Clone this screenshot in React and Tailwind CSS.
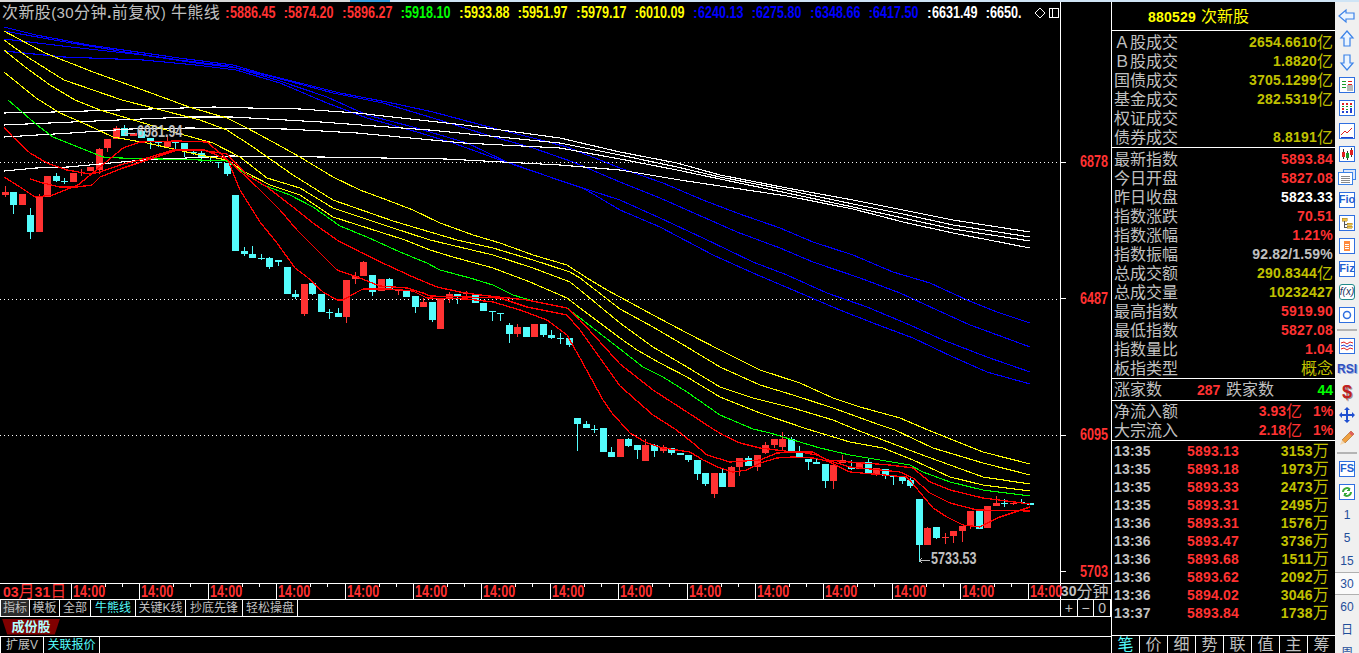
// Index K-line terminal: chart with moving averages, quote panel and side toolbar
const RED = "#ff3232";
const CYAN = "#54fcfc";

// [bar, bodyTop, bodyBottom, wickTop, wickBottom, colour]
const bars = [
  [0, 192, 195, 186, 197, "r"], [1, 192, 205, 192, 214, "c"], [2, 194, 205, 194, 205, "r"], [3, 215, 232, 208, 239, "c"],
  [4, 197, 232, 194, 232, "r"], [5, 176, 197, 176, 197, "r"], [6, 176, 181, 173, 182, "c"], [7, 181, 182, 178, 184, "c"],
  [8, 173, 182, 173, 182, "r"], [9, 172, 173, 169, 176, "r"], [10, 167, 171, 167, 171, "r"], [11, 149, 170, 148, 174, "r"],
  [12, 139, 148, 139, 152, "r"], [13, 128, 139, 126, 139, "r"], [14, 128, 136, 125, 136, "c"], [15, 133, 136, 133, 136, "r"],
  [16, 131, 138, 131, 138, "c"], [17, 138, 141, 138, 149, "c"], [18, 142, 143, 141, 147, "c"], [19, 142, 147, 135, 147, "r"],
  [20, 142, 143, 142, 149, "c"], [21, 143, 150, 143, 157, "c"], [22, 152, 153, 150, 155, "c"], [23, 153, 157, 151, 162, "c"],
  [24, 160, 161, 158, 162, "c"], [25, 162, 163, 162, 168, "c"], [26, 163, 174, 163, 176, "c"], [27, 195, 251, 195, 251, "c"],
  [28, 251, 254, 247, 256, "c"], [29, 254, 258, 246, 258, "c"], [30, 258, 259, 254, 260, "c"], [31, 258, 267, 257, 269, "c"],
  [32, 260, 262, 260, 266, "c"], [33, 267, 294, 267, 294, "c"], [34, 294, 297, 290, 299, "c"], [35, 284, 314, 284, 316, "r"],
  [36, 283, 294, 283, 295, "c"], [37, 294, 312, 294, 312, "c"], [38, 312, 313, 309, 319, "c"], [39, 313, 317, 308, 317, "c"],
  [40, 280, 317, 280, 323, "r"], [41, 276, 279, 272, 284, "r"], [42, 262, 276, 261, 276, "r"], [43, 275, 292, 275, 296, "c"],
  [44, 279, 291, 279, 291, "r"], [45, 279, 290, 278, 290, "c"], [46, 290, 291, 290, 295, "r"], [47, 290, 297, 290, 297, "c"],
  [48, 296, 307, 296, 313, "c"], [49, 302, 307, 298, 307, "r"], [50, 302, 320, 302, 322, "c"], [51, 299, 329, 299, 329, "r"],
  [52, 294, 299, 292, 303, "r"], [53, 294, 296, 294, 304, "c"], [54, 293, 294, 291, 296, "r"], [55, 294, 303, 294, 303, "c"],
  [56, 303, 311, 303, 311, "c"], [57, 311, 312, 311, 321, "c"], [58, 313, 314, 313, 321, "c"], [59, 325, 334, 323, 343, "c"],
  [60, 327, 334, 324, 337, "r"], [61, 327, 337, 327, 337, "c"], [62, 324, 337, 324, 337, "r"], [63, 324, 335, 324, 337, "c"],
  [64, 335, 338, 330, 339, "c"], [65, 338, 339, 333, 344, "c"], [66, 338, 345, 338, 347, "c"],
  [67, 418, 424, 418, 451, "c"], [68, 424, 428, 421, 428, "c"], [69, 429, 430, 425, 433, "c"], [70, 428, 452, 428, 452, "c"],
  [71, 452, 457, 447, 457, "c"], [72, 439, 457, 439, 457, "r"], [73, 439, 446, 438, 447, "c"], [74, 445, 450, 445, 459, "c"],
  [75, 445, 461, 439, 461, "r"], [76, 445, 451, 444, 457, "c"], [77, 447, 451, 445, 453, "r"], [78, 448, 453, 448, 455, "c"],
  [79, 453, 455, 453, 455, "c"], [80, 455, 460, 455, 462, "c"], [81, 460, 474, 460, 480, "c"], [82, 473, 484, 473, 486, "c"],
  [83, 473, 494, 473, 498, "r"], [84, 473, 487, 468, 487, "c"], [85, 467, 487, 466, 487, "r"], [86, 458, 467, 458, 476, "r"],
  [87, 458, 466, 456, 466, "c"], [88, 455, 467, 455, 471, "r"], [89, 445, 453, 442, 454, "r"], [90, 439, 445, 439, 448, "r"],
  [91, 439, 447, 432, 450, "r"], [92, 439, 451, 437, 453, "c"], [93, 452, 457, 446, 457, "c"], [94, 459, 462, 459, 470, "c"],
  [95, 462, 464, 459, 464, "c"], [96, 464, 481, 464, 488, "c"], [97, 465, 481, 465, 489, "r"], [98, 460, 463, 455, 463, "r"],
  [99, 467, 469, 460, 470, "c"], [100, 462, 469, 462, 469, "r"], [101, 462, 474, 459, 474, "c"], [102, 468, 474, 468, 476, "r"],
  [103, 469, 476, 469, 479, "c"], [104, 476, 477, 476, 485, "c"], [105, 477, 481, 477, 484, "c"], [106, 480, 486, 477, 488, "c"],
  [107, 499, 545, 499, 562, "c"], [108, 528, 545, 527, 545, "r"], [109, 527, 538, 527, 539, "c"], [110, 537, 538, 533, 544, "r"],
  [111, 531, 536, 531, 543, "r"], [112, 526, 531, 526, 542, "r"], [113, 511, 526, 511, 529, "r"], [114, 511, 529, 511, 529, "c"],
  [115, 506, 528, 506, 528, "r"], [116, 503, 506, 496, 506, "r"], [117, 503, 504, 499, 507, "c"], [118, 503, 504, 501, 505, "r"],
  [119, 502, 503, 499, 503, "c"], [120, 503, 505, 503, 505, "c"],
];

// Moving-average series, one polyline each
const averages = [
  { color: "#0000ff", pts: "4,27 36,35 89,45 179,58 233,65 260,73 300,83 340,93 387,102 433,112 493,128 533,138 567,147 620,168 663,183 703,200 737,213 780,228 813,242 853,255 893,272 930,283 967,300 997,312 1030,323" },
  { color: "#0000ff", pts: "4,31 54,40 125,52 179,60 229,66 277,78 333,93 383,103 433,118 487,135 533,148 573,162 620,182 660,198 703,217 737,232 780,248 813,262 860,278 900,293 937,310 970,325 1003,337 1030,347" },
  { color: "#0000ff", pts: "4,39 71,47 143,55 196,63 236,68 277,80 327,97 367,115 413,127 467,143 507,162 567,183 620,200 660,218 703,238 753,262 787,275 827,293 867,307 910,325 943,340 987,357 1030,372" },
  { color: "#0000ff", pts: "4,51 64,57 143,60 196,65 236,70 280,83 327,103 367,118 417,132 453,143 500,160 550,177 583,188 620,210 660,227 713,255 753,273 793,290 840,310 873,323 913,338 953,357 987,372 1030,384" },
  { color: "#ffffff", pts: "4,113 54,112 118,110 214,107 250,108 300,109 357,113 464,125 560,138 620,152 677,163 720,175 787,188 853,200 903,210 953,220 1030,232" },
  { color: "#ffffff", pts: "4,125 118,120 188,117 232,117 321,122 429,130 560,143 620,155 677,167 720,177 787,190 853,204 903,214 953,225 1030,237" },
  { color: "#ffffff", pts: "4,137 71,133 130,129 189,128 286,129 357,133 464,143 560,148 620,159 677,170 720,179 787,193 853,207 903,218 953,229 1030,241" },
  { color: "#ffffff", pts: "4,171 36,168 68,167 143,160 229,156 321,157 446,159 560,165 620,170 680,180 720,186 787,196 853,209 903,222 953,233 1030,248" },
  { color: "#ffff00", pts: "4,31 45,53 93,72 143,90 189,107 227,118 247,128 273,142 300,157 333,177 360,190 387,200 413,210 440,223 473,235 500,243 533,255 567,265 587,278 607,290 620,297 653,315 687,333 720,350 760,370 800,383 833,398 860,407 900,418 928,430 983,452 1030,464" },
  { color: "#ffff00", pts: "4,40 29,58 64,80 122,100 200,120 227,130 253,147 293,175 333,200 393,221 457,240 493,248 533,260 570,272 580,278 620,309 653,327 687,347 720,367 760,385 793,395 833,408 880,425 895,430 933,448 983,463 1030,475" },
  { color: "#ffff00", pts: "4,50 25,67 50,85 75,100 100,110 177,133 213,143 240,157 267,178 300,188 333,208 393,228 430,240 493,255 533,268 570,282 580,290 620,323 653,347 687,367 720,387 753,398 793,408 833,420 857,430 917,453 983,477 1030,484" },
  { color: "#ffff00", pts: "4,72 36,98 60,113 83,123 113,137 147,143 200,155 227,160 245,172 270,185 300,195 333,217 405,240 430,250 453,257 493,268 530,282 567,298 580,308 620,338 637,350 660,363 687,377 720,397 760,413 807,429 850,442 883,448 913,460 950,477 983,485 1030,491" },
  { color: "#00ff00", pts: "8,100 22,112 37,125 53,137 93,153 103,157 120,158 200,160 227,161 240,170 263,185 290,195 313,207 340,226 367,237 400,252 427,263 440,270 470,278 493,285 513,295 533,301 567,308 580,318 620,349 643,367 663,377 687,392 720,415 753,429 770,433 793,440 820,448 850,455 910,465 923,472 950,482 983,490 1030,496" },
  { color: "#ff0000", pts: "4,127 13,137 30,153 47,163 67,170 90,174 100,172 120,165 147,158 173,150 200,150 227,154 247,175 267,187 293,207 313,223 337,240 360,252 387,265 413,277 437,287 460,292 480,295 527,300 567,308 580,320 620,364 653,390 687,412 713,429 723,435 740,443 760,448 793,452 813,452 827,460 850,462 890,465 913,468 930,482 950,490 983,498 1030,504" },
  { color: "#ff0000", pts: "30,179 43,183 60,187 77,187 92,185 100,177 123,168 147,160 177,150 205,150 228,160 257,187 280,210 297,230 317,250 337,270 360,278 380,286 407,288 423,293 430,296 467,297 500,298 527,307 567,315 580,330 620,386 653,415 675,429 693,443 707,455 730,462 760,460 777,453 800,452 817,455 827,460 850,467 900,472 913,478 930,493 950,503 977,510 1030,511" },
  { color: "#ff0000", pts: "4,177 20,187 35,197 53,195 78,185 100,167 123,148 140,142 177,141 207,142 228,160 240,190 260,222 277,243 295,268 307,277 323,292 337,300 343,300 357,292 363,289 390,289 413,291 427,298 467,299 493,302 520,310 547,320 567,335 580,358 603,400 612,413 630,433 647,443 663,448 690,452 703,460 720,468 733,472 747,470 760,463 777,458 793,457 813,458 827,461 850,472 907,477 918,490 933,508 947,517 963,525 980,527 997,518 1030,507" },
];

const legend = [
  ["5886.45", "text-[#ff3232]"], ["5874.20", "text-[#ff3232]"], ["5896.27", "text-[#ff3232]"], ["5918.10", "text-[#00ff00]"],
  ["5933.88", "text-[#ffff00]"], ["5951.97", "text-[#ffff00]"], ["5979.17", "text-[#ffff00]"], ["6010.09", "text-[#ffff00]"],
  ["6240.13", "text-[#0000ff]"], ["6275.80", "text-[#0000ff]"], ["6348.66", "text-[#0000ff]"], ["6417.50", "text-[#0000ff]"],
  ["6631.49", "text-white"],
];

const YEL = "text-[#c0c000]";
const REDT = "text-[#ff3232]";

const sectionA = [
  ["Ａ股成交", "2654.6610", "亿", YEL], ["Ｂ股成交", "1.8820", "亿", YEL], ["国债成交", "3705.1299", "亿", YEL],
  ["基金成交", "282.5319", "亿", YEL], ["权证成交", "", "", YEL], ["债券成交", "8.8191", "亿", YEL],
];
const sectionB = [
  ["最新指数", "5893.84", "", REDT], ["今日开盘", "5827.08", "", REDT], ["昨日收盘", "5823.33", "", "text-white"],
  ["指数涨跌", "70.51", "", REDT], ["指数涨幅", "1.21%", "", REDT], ["指数振幅", "92.82/1.59%", "", "text-[#c0c0c0]"],
  ["总成交额", "290.8344", "亿", YEL], ["总成交量", "10232427", "", YEL], ["最高指数", "5919.90", "", REDT],
  ["最低指数", "5827.08", "", REDT], ["指数量比", "1.04", "", REDT], ["板指类型", "", "概念", YEL],
];
const ticks = [
  ["13:35", "5893.13", "3153"], ["13:35", "5893.18", "1973"], ["13:35", "5893.33", "2473"], ["13:35", "5893.31", "2495"],
  ["13:36", "5893.31", "1576"], ["13:36", "5893.47", "3736"], ["13:36", "5893.68", "1511"], ["13:36", "5893.62", "2092"],
  ["13:36", "5894.02", "3046"], ["13:37", "5893.84", "1738"],
];

// Tall condensed digits used on the chart, squeezed from the bold face
const Digits = ({ children, className = "" }) => (
  <span className={`inline-block origin-left scale-x-[0.74] whitespace-nowrap text-[17px] font-bold leading-[16px] ${className}`}>
    {children}
  </span>
);

const Chart = () => (
  <svg width="1060" height="559" viewBox="0 24 1060 559" shapeRendering="crispEdges" className="block">
    {[162, 299, 435].map((y) => (
      <line key={y} x1="0" x2="1060" y1={y + 0.5} y2={y + 0.5} stroke="#fff" strokeDasharray="1 3" />
    ))}
    {bars.map(([i, top, bot, wt, wb, c]) => {
      const x = Math.round(4.5 + 8.546 * i);
      const fill = c === "r" ? RED : CYAN;
      return (
        <g key={i} fill={fill}>
          <rect x={x} y={wt} width="1" height={wb - wt} />
          <rect x={x - 3} y={top} width="7" height={bot - top} />
        </g>
      );
    })}
    {averages.map((a, i) => (
      <polyline key={i} points={a.pts} fill="none" stroke={a.color} strokeWidth={a.color === "#ff0000" ? 1.3 : 1.1} />
    ))}
    <path d="M919 560.5h11M919 560.5l3-2M919 560.5l3 2" stroke="#c0c0c0" fill="none" />
    <path d="M124 133.5h11M124 133.5l3-2M124 133.5l3 2" stroke="#c0c0c0" fill="none" />
  </svg>
);

const Row = ({ label, value, unit, color }) => (
  <div className="flex h-[19px] items-center justify-between pl-[2px] pr-[2px]">
    <span className="text-[16px] leading-[19px] text-[#c0c0c0]">{label}</span>
    <span className={`flex items-center ${color}`}>
      <span className="text-[14px] font-bold tracking-[0.2px]">{value}</span>
      {unit && <span className="text-[16px] leading-[19px]">{unit}</span>}
    </span>
  </div>
);

const Frame = ({ children }) => (
  <svg width="16" height="16" viewBox="0 0 16 16" shapeRendering="crispEdges">
    <rect x="0.5" y="0.5" width="15" height="15" fill="#fff" stroke="#2f6fe0" />
    {children}
  </svg>
);

const FrameText = ({ children }) => (
  <span className="flex h-4 w-4 items-center justify-center border border-[#2f6fe0] bg-white text-[11px] font-bold leading-none text-[#1f5fd0]">
    {children}
  </span>
);

const arrow = (d) => (
  <svg width="18" height="18" viewBox="0 0 18 18">
    <path d={d} fill="#eaf4ff" stroke="#3b82e8" strokeWidth="1.2" />
  </svg>
);

const toolIcons = [
  arrow("M1 9 8 3v3h8v6H8v3z"),
  arrow("M9 1l6 7h-3v8H6V8H3z"),
  arrow("M9 17l6-7h-3V2H6v8H3z"),
  <Frame>
    <path d="M3 4h4v1H3zM3 7h4v1H3zM3 10h4v1H3z" fill="#1a9a2a" /><path d="M9 4h4v1H9zM9 7h4v1H9z" fill="#e02020" />
    <circle cx="11" cy="11" r="3.5" fill="#b8b8b8" />
  </Frame>,
  <Frame>
    <path d="M3 3h2v2H3zM3 8h2v2H3zM7 3h2v2H7zM11 3h2v2h-2z" fill="#e02020" />
    <path d="M3 6h2v1H3zM7 6h2v1H7zM11 6h2v1h-2zM7 9h2v1H7z" fill="#1a9a2a" />
    <path d="M3 11h2v2H3zM7 11h2v2H7zM11 8h2v5h-2z" fill="#2040d0" />
  </Frame>,
  <Frame>
    <polyline points="2,12 6,8 8,10 13,5" fill="none" stroke="#e02020" shapeRendering="auto" />
    <path d="M2 14h12" stroke="#2040d0" />
  </Frame>,
  <Frame>
    <path d="M4 3v10M8 5v9M12 2v9" stroke="#333" />
    <rect x="3" y="6" width="3" height="5" fill="#e02020" /><rect x="7" y="7" width="3" height="5" fill="#1a9a2a" /><rect x="11" y="4" width="3" height="5" fill="#e02020" />
  </Frame>,
  <svg width="18" height="16" viewBox="0 0 18 16" shapeRendering="crispEdges">
    <rect x="5.5" y="0.5" width="12" height="10" fill="#dce8fb" stroke="#3b82e8" />
    <rect x="0.5" y="3.5" width="14" height="12" fill="#fff" stroke="#3b82e8" />
    <path d="M3 7h9M3 9h9M3 11h9M3 13h9" stroke="#888" />
  </svg>,
  <FrameText>Fio</FrameText>,
  <Frame>
    <path d="M3 3h5v3H3zM8 8h5v2H8zM8 11h5v2H8z" fill="#f0c040" stroke="#a08020" strokeWidth="0.5" /><path d="M5 6v6h3M5 9h3" stroke="#555" fill="none" />
  </Frame>,
  <Frame>
    <path d="M5 3h6v10H5z" fill="#ff8a3c" /><path d="M6 6h4M6 8h4M6 10h4" stroke="#fff" />
  </Frame>,
  <FrameText>Fiz</FrameText>,
  <span className="flex h-4 w-4 items-center justify-center rounded-[3px] border border-[#1f8a8a] bg-white text-[10px] italic leading-none text-[#203060]">f(x)</span>,
  <Frame><circle cx="8" cy="8" r="3.5" fill="none" stroke="#2f6fe0" strokeWidth="1.5" shapeRendering="auto" /></Frame>,
  "sep",
  <Frame>
    <polyline points="2,5 5,4 8,6 11,4 14,5" fill="none" stroke="#e02020" shapeRendering="auto" />
    <polyline points="2,8 5,7 8,9 11,7 14,8" fill="none" stroke="#2040d0" shapeRendering="auto" />
    <polyline points="2,11 5,10 8,12 11,10 14,11" fill="none" stroke="#e02020" shapeRendering="auto" />
  </Frame>,
  <span className="text-[12px] font-bold leading-none text-[#2f4fc0] [text-shadow:1px_1px_0_#9fb0e0]">RSI</span>,
  <span className="text-[18px] font-bold leading-none text-[#c02020] [text-shadow:1px_1px_0_#999]">$</span>,
  <svg width="18" height="18" viewBox="0 0 18 18">
    <path d="M9 1l3 3h-2v4h4V6l3 3-3 3v-2h-4v4h2l-3 3-3-3h2v-4H4v2L1 9l3-3v2h4V4H6z" fill="#1f4fd0" />
  </svg>,
  <svg width="18" height="18" viewBox="0 0 18 18">
    <path d="M13 2l3 3-9 9-3-3z" fill="#f0a040" stroke="#a06020" strokeWidth="0.6" />
    <path d="M4 11l3 3-5 2z" fill="#f4d8b0" /><path d="M13 2l3 3-2 2-3-3z" fill="#e06060" />
  </svg>,
  "sep",
  <FrameText>FS</FrameText>,
  <Frame>
    <path d="M4 8a4 4 0 0 1 7-2.5M12 8a4 4 0 0 1-7 2.5" fill="none" stroke="#38a838" strokeWidth="2" shapeRendering="auto" />
    <path d="M11 3v4H8zM5 13V9h3z" fill="#38a838" />
  </Frame>,
];

const periods = ["1", "5", "15", "30", "60", "日", "周"];

const Toolbar = () => (
  <div className="flex w-[24px] shrink-0 flex-col items-center bg-[#f0f0f0] pt-[2px]">
    {toolIcons.map((icon, i) =>
      icon === "sep" ? (
        <div key={i} className="flex h-[8px] w-full shrink-0 items-center px-[2px]"><div className="h-[2px] w-full bg-[#b4b4b4]" /></div>
      ) : (
        <div key={i} className="flex h-[23px] shrink-0 items-center justify-center">{icon}</div>
      )
    )}
    {periods.map((p) => (
      <div
        key={p}
        className={`flex h-[23px] w-full shrink-0 items-center justify-center text-[12px] text-[#1f4e9a] ${p === "30" ? "border-y border-[#b0b0b0] bg-[#fafafa]" : ""}`}
      >
        {p}
      </div>
    ))}
  </div>
);

const Panel = () => (
  <div className="flex w-[224px] shrink-0 flex-col border-l border-white">
    <div className="flex h-[29px] shrink-0 items-center border-b border-white pl-[36px] pt-[2px] text-[#ffff00]">
      <span className="text-[14px] font-bold tracking-[0.2px]">880529</span>
      <span className="ml-[5px] text-[16px]">次新股</span>
    </div>
    <div className="h-[117px] shrink-0 border-b border-white pt-[2px]">
      {sectionA.map(([l, v, u, c]) => <Row key={l} label={l} value={v} unit={u} color={c} />)}
    </div>
    <div className="h-[231px] shrink-0 border-b border-white pt-[2px]">
      {sectionB.map(([l, v, u, c]) => <Row key={l} label={l} value={v} unit={u} color={c} />)}
    </div>
    <div className="flex h-[22px] shrink-0 items-center border-b border-white pl-[2px] pr-[2px] pt-px text-[16px] text-[#c0c0c0]">
      <span>涨家数</span>
      <span className="ml-[35px] w-[22px] text-[14px] font-bold text-[#ff3232]">287</span>
      <span className="ml-[7px]">跌家数</span>
      <span className="ml-auto text-[14px] font-bold text-[#00ff00]">44</span>
    </div>
    <div className="h-[40px] shrink-0 border-b border-white pt-px">
      {[["净流入额", "3.93"], ["大宗流入", "2.18"]].map(([l, v]) => (
        <div key={l} className="flex h-[19px] items-center pl-[2px] pr-[2px] text-[#c0c0c0]">
          <span className="text-[16px]">{l}</span>
          <span className="ml-auto flex items-center text-[#ff3232]">
            <span className="text-[14px] font-bold">{v}</span>
            <span className="text-[16px]">亿</span>
          </span>
          <span className="ml-[11px] w-[20px] text-right text-[14px] font-bold text-[#ff3232]">1%</span>
        </div>
      ))}
    </div>
    <div className="h-[195px] shrink-0 border-b border-white pt-px">
      {ticks.map(([t, p, v], i) => (
        <div key={i} className="flex h-[18px] items-center pl-[2px] pr-[6px] text-[14px] font-bold tracking-[0.2px]">
          <span className="w-[73px] text-[#c0c0c0]">{t}</span>
          <span className="text-[#ff3232]">{p}</span>
          <span className="ml-auto flex items-center text-[#c0c000]">
            {v}
            <span className="text-[16px] font-normal">万</span>
          </span>
        </div>
      ))}
    </div>
    <div className="flex flex-1">
      {["笔", "价", "细", "势", "联", "值", "主", "筹"].map((t, i) => (
        <div key={t} className={`flex flex-1 items-center justify-center text-[16px] leading-none ${i > 0 ? "border-l border-white" : ""} ${i === 0 ? "text-[#54fcfc]" : "text-[#c0c0c0]"}`}>
          {t}
        </div>
      ))}
    </div>
  </div>
);

const Tab = ({ children, active, on }) => (
  <div className={`flex h-full items-center justify-center whitespace-nowrap border-r border-white text-[12px] leading-none ${on ? "bg-[#2c2c2c]" : ""} ${active ? "text-[#54fcfc]" : "text-[#c0c0c0]"}`}>
    {children}
  </div>
);

export default function App() {
  return (
    <div className="flex h-[653px] w-[1359px] flex-col overflow-hidden bg-black [font-family:'Liberation_Sans','Noto_Sans_CJK_SC',sans-serif]">
      <div className="flex h-[2px] shrink-0">
        <div className="w-[350px] bg-[#d8d8d8]" />
        <div className="w-[40px] bg-[#3aa0e0]" />
        <div className="flex-1 bg-[#cfe4f5]" />
      </div>
      <div className="flex min-h-0 flex-1">
        <div className="flex w-[1111px] shrink-0 flex-col">
          <div className="flex h-[581px] shrink-0">
            <div className="relative flex w-[1060px] shrink-0 flex-col">
              {/* legend strip above the plot */}
              <div className="flex h-[22px] shrink-0 items-center">
                <span className="w-[225px] shrink-0 whitespace-nowrap pl-[2px] text-[16px] tracking-[0.4px] text-[#c0c0c0]">
                  次新股<span className="text-[15px]">(30</span>分钟<span className="font-bold">.</span>前复权<span className="text-[14px]">)</span> 牛熊线
                </span>
                {legend.map(([v, c]) => (
                  <span key={v} className={`flex w-[58.5px] shrink-0 items-center ${c}`}>
                    <span className="w-[7px] text-[14px] font-bold">:</span>
                    <Digits>{v}</Digits>
                  </span>
                ))}
                <span className="flex w-[46px] shrink-0 items-center text-white">
                  <span className="w-[7px] text-[14px] font-bold">:</span>
                  <Digits>6650.</Digits>
                </span>
                <svg width="12" height="12" viewBox="0 0 12 12" className="ml-[2px]" shapeRendering="crispEdges">
                  <path d="M6 1l5 5-5 5-5-5z" fill="none" stroke="#fff" />
                </svg>
                <svg width="10" height="10" viewBox="0 0 10 10" className="ml-[3px]" shapeRendering="crispEdges">
                  <rect x="0.5" y="0.5" width="9" height="9" fill="none" stroke="#fff" />
                  <path d="M3.5 0v10" stroke="#fff" />
                </svg>
              </div>
              <Chart />
              <Digits className="absolute left-[137px] top-[122px] text-[#c0c0c0]">6981.94</Digits>
              <Digits className="absolute left-[931px] top-[549px] text-[#c0c0c0]">5733.53</Digits>
            </div>
            <div className="w-[51px] shrink-0 border-l border-white pt-[92px]">
              {["6878", "6487", "6095", "5703"].map((v) => (
                <div key={v} className="flex h-[136.5px] items-center">
                  <span className="h-px w-[5px] bg-white" />
                  <span className="ml-[14px] w-[28px]"><Digits className="text-[#ff3232]">{v}</Digits></span>
                </div>
              ))}
            </div>
          </div>
          {/* time axis */}
          <div className="flex h-[16px] shrink-0 border-t border-white">
            <div className="flex w-[71px] shrink-0 items-center whitespace-nowrap pl-[3px] text-[14px] font-bold leading-none text-[#ff3232]">
              03<span className="text-[16px] font-normal">月</span>31<span className="text-[16px] font-normal">日</span>
            </div>
            {Array.from({ length: 14 }).map((_, i) => (
              <div key={i} className="relative flex w-[68.4px] shrink-0 items-center border-l border-white pl-[1px] text-[#ff3232]">
                <Digits>14:00</Digits>
                <span className="absolute left-[33px] top-0 h-[3px] w-px bg-white" />
                <span className="absolute left-[50px] top-0 h-[3px] w-px bg-white" />
              </div>
            ))}
            <div className="flex w-[31.4px] shrink-0 items-center border-l border-white pl-[1px] text-[#ff3232]"><Digits className="w-[30px]">14:00</Digits></div>
            <div className="flex w-[51px] shrink-0 items-center whitespace-nowrap border-l border-white text-[#c0c0c0]">
              <span className="text-[14px] font-bold">30</span><span className="text-[16px] leading-none">分钟</span>
            </div>
          </div>
          {/* template tabs */}
          <div className="flex h-[17px] shrink-0 border-t border-white">
            <div className="w-[30px] border-l border-white"><Tab on>指标</Tab></div>
            <div className="w-[30px]"><Tab>模板</Tab></div>
            <div className="w-[31px]"><Tab>全部</Tab></div>
            <div className="w-[45px]"><Tab active>牛熊线</Tab></div>
            <div className="w-[50px]"><Tab>关键K线</Tab></div>
            <div className="w-[57px]"><Tab>抄底先锋</Tab></div>
            <div className="w-[55px]"><Tab>轻松操盘</Tab></div>
            <div className="flex-1" />
            <div className="flex w-[51px] shrink-0 border-l border-white text-[14px] text-[#c0c0c0]">
              {["+", "−", "0"].map((s) => (
                <span key={s} className="flex flex-1 items-center justify-center border-r border-white leading-none">{s}</span>
              ))}
            </div>
          </div>
          {/* stock group band */}
          <div className="flex h-[20px] shrink-0 items-center border-t border-white pl-[2px]">
            <div className="flex h-[16px] w-[58px] items-center justify-center bg-[#800000] text-[13px] font-bold leading-none text-[#b0ffff] [clip-path:polygon(0_0,100%_0,91%_100%,9%_100%)]">
              成份股
            </div>
          </div>
          <div className="flex flex-1 border-t border-white">
            <div className="flex w-[44px] items-center justify-center whitespace-nowrap border-r border-l border-white text-[12px] leading-none text-[#c0c0c0]">扩展V</div>
            <div className="flex w-[56px] items-center justify-center whitespace-nowrap border-r border-white text-[12px] leading-none text-[#54fcfc]">关联报价</div>
          </div>
        </div>
        <Panel />
        <Toolbar />
      </div>
    </div>
  );
}
